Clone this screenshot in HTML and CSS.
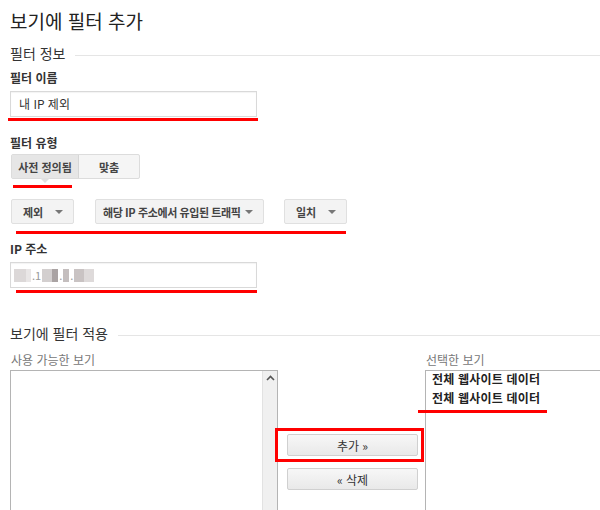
FILE: index.html
```html
<!DOCTYPE html>
<html lang="ko">
<head>
    <meta charset="UTF-8">
    <title>보기에 필터 추가</title>
    <link rel="stylesheet" href="styles.css">
</head>
<body>
<main class="page">
    <h1 class="title">보기에 필터 추가</h1>

    <div class="section-head">
        <span>필터 정보</span>
        <div class="rule"></div>
    </div>

    <div class="field-label">필터 이름</div>
    <div class="text-input">내 IP 제외</div>
    <div class="mark mark-name"></div>

    <div class="field-label label-type">필터 유형</div>
    <div class="toggle">
        <div class="toggle-item active">사전 정의됨</div>
        <div class="toggle-item">맞춤</div>
    </div>
    <div class="mark mark-toggle"></div>

    <div class="selects">
        <div class="select sel-exclude">제외<span class="caret"></span></div>
        <div class="select sel-source">해당 IP 주소에서 유입된 트래픽<span class="caret"></span></div>
        <div class="select sel-match">일치<span class="caret"></span></div>
    </div>
    <div class="mark mark-selects"></div>

    <div class="field-label label-ip">IP 주소</div>
    <div class="text-input ip-input">
        <span class="blur b1"></span><span class="blur b2"></span><span class="ip-dot">.1</span><span class="blur b3"></span><span class="blur b4"></span><span class="ip-dot">.</span><span class="blur b5"></span><span class="ip-dot">.</span><span class="blur b6"></span><span class="blur b7"></span>
    </div>
    <div class="mark mark-ip"></div>

    <div class="section-head apply-head">
        <span>보기에 필터 적용</span>
        <div class="rule"></div>
    </div>

    <div class="views">
        <div class="view-col">
            <div class="view-label">사용 가능한 보기</div>
            <div class="listbox left-list">
                <div class="list-body"></div>
                <div class="scrollbar">
                    <svg width="9" height="6" viewBox="0 0 9 6"><path d="M1 5 L4.5 1.5 L8 5" fill="none" stroke="#555" stroke-width="1.6"/></svg>
                </div>
            </div>
        </div>

        <div class="view-actions">
            <div class="add-box">
                <button class="btn">추가 »</button>
            </div>
            <button class="btn btn-remove">« 삭제</button>
        </div>

        <div class="view-col">
            <div class="view-label">선택한 보기</div>
            <div class="listbox right-list">
                <div class="list-item">전체 웹사이트 데이터</div>
                <div class="list-item">전체 웹사이트 데이터</div>
                <div class="mark mark-views"></div>
            </div>
        </div>
    </div>
</main>
</body>
</html>
```

FILE: styles.css
```css
:root {
    --text-color: #222;
    --label-gray: #777;
    --border-color: #d9d9d9;
    --btn-bg: #f3f3f3;
    --mark-red: #f00;
}

body, html {
    margin: 0;
    padding: 0;
    background: white;
    color: var(--text-color);
    font-family: 'Noto Sans CJK KR', 'Noto Sans', sans-serif;
    overflow: hidden;
}

.page {
    padding: 8px 0 0 10px;
}

.title {
    margin: 0;
    font-size: 19px;
    font-weight: normal;
    line-height: 26px;
    color: #222;
}

.section-head {
    display: flex;
    align-items: center;
    gap: 10px;
    margin-top: 9px;
    font-size: 14px;
    line-height: 20px;
    color: #333;
}

.section-head .rule {
    flex: 1;
    height: 1px;
    background: #e5e5e5;
    margin-top: 4px;
}

.field-label {
    margin-top: 6px;
    font-size: 12px;
    font-weight: bold;
    line-height: 18px;
    color: #333;
}

.label-type {
    margin-top: 13px;
}

.label-ip {
    margin-top: 6px;
}

.text-input {
    margin-top: 4px;
    height: 24px;
    border: 1px solid var(--border-color);
    box-shadow: inset 0 1px 1px rgba(0, 0, 0, 0.05);
    padding-left: 8px;
    box-sizing: content-box;
    width: 237px;
    font-size: 12px;
    line-height: 24px;
    color: #333;
}

.mark {
    height: 3px;
    background: var(--mark-red);
}

.mark-name {
    margin: 1px 0 0 -2px;
    width: 250px;
}

.toggle {
    display: flex;
    margin: 2px 0 0 1px;
    width: 129px;
    height: 25px;
    border: 1px solid #dcdcdc;
    border-radius: 2px;
    box-sizing: border-box;
    background: #f5f5f5;
    font-size: 11px;
    font-weight: bold;
    color: #444;
}

.toggle-item {
    display: flex;
    align-items: center;
    justify-content: center;
    flex: 1;
}

.toggle-item.active {
    flex: 0 0 66px;
    background: #e6e6e6;
    border-right: 1px solid #d6d6d6;
    position: relative;
}

.toggle-item.active::after {
    content: "";
    position: absolute;
    bottom: -5px;
    left: 28px;
    border-left: 5px solid transparent;
    border-right: 5px solid transparent;
    border-top: 5px solid #e0e0e0;
}

.mark-toggle {
    margin: 6px 0 0 3px;
    width: 59px;
}

.selects {
    display: flex;
    margin: 11px 0 0 1px;
    gap: 21px;
}

.select {
    display: flex;
    align-items: center;
    justify-content: space-between;
    height: 25px;
    padding: 0 10px 0 11px;
    box-sizing: border-box;
    border: 1px solid #e0e0e0;
    border-radius: 2px;
    background: var(--btn-bg);
    font-size: 11px;
    font-weight: bold;
    color: #444;
    white-space: nowrap;
}

.sel-exclude {
    width: 63px;
}

.sel-source {
    width: 169px;
    padding-left: 7px;
    letter-spacing: -0.4px;
}

.sel-match {
    width: 63px;
    margin-left: -1px;
}

.caret {
    width: 0;
    height: 0;
    border-left: 4px solid transparent;
    border-right: 4px solid transparent;
    border-top: 4px solid #777;
}

.mark-selects {
    margin: 7px 0 0 6px;
    width: 330px;
}

.ip-input {
    display: flex;
    align-items: center;
    padding-left: 3px;
    width: 242px;
}

.blur {
    display: inline-block;
    height: 13px;
    background: #d8d4d4;
}

.b1 { width: 12px; background: #dcd8d8; }
.b2 { width: 5px; background: #e9e6e6; }
.b3 { width: 10px; background: #d3cfcf; }
.b4 { width: 6px; background: #aaa3a3; }
.b5 { width: 6px; background: #c4bebe; }
.b6 { width: 10px; background: #c9c3c3; }
.b7 { width: 10px; background: #dedada; }

.ip-dot {
    font-size: 11px;
    color: #999;
    line-height: 13px;
    padding: 0 1px;
}

.mark-ip {
    margin: 2px 0 0 6px;
    width: 241px;
}

.apply-head {
    margin-top: 30px;
}

.views {
    display: grid;
    grid-template-columns: 268px 147px 1fr;
    margin-top: 9px;
}

.view-label {
    font-size: 12px;
    line-height: 16px;
    color: var(--label-gray);
    padding-left: 1px;
}

.listbox {
    margin-top: 2px;
    height: 160px;
    border: 1px solid #b4b4b4;
    border-bottom: none;
    box-sizing: border-box;
}

.left-list {
    display: flex;
    width: 268px;
}

.list-body {
    flex: 1;
}

.scrollbar {
    width: 15px;
    background: #f0f0f0;
    border-left: 1px solid #e2e2e2;
    display: flex;
    justify-content: center;
    padding-top: 4px;
    box-sizing: border-box;
}

.right-list {
    margin-right: -20px;
    padding: 0 0 0 6px;
}

.list-item {
    font-size: 12px;
    font-weight: bold;
    line-height: 19px;
    letter-spacing: 0.2px;
    color: #222;
    margin-top: -2px;
}

.list-item + .list-item {
    margin-top: 0;
}

.mark-views {
    margin: 3px 0 0 -14px;
    width: 129px;
}

.view-actions {
    display: flex;
    flex-direction: column;
    align-items: flex-start;
    padding-top: 76px;
}

.add-box {
    margin-left: -3px;
    padding: 3px 2px 3px 9px;
    border: 3px solid var(--mark-red);
    width: 149px;
    box-sizing: border-box;
}

.btn {
    display: block;
    width: 131px;
    height: 22px;
    padding: 0;
    border: 1px solid #d0d0d0;
    border-radius: 2px;
    background: linear-gradient(#f7f7f7, #e9e9e9);
    font-family: inherit;
    font-size: 12px;
    color: #333;
}

.btn-remove {
    margin: 6px 0 0 9px;
}
```
